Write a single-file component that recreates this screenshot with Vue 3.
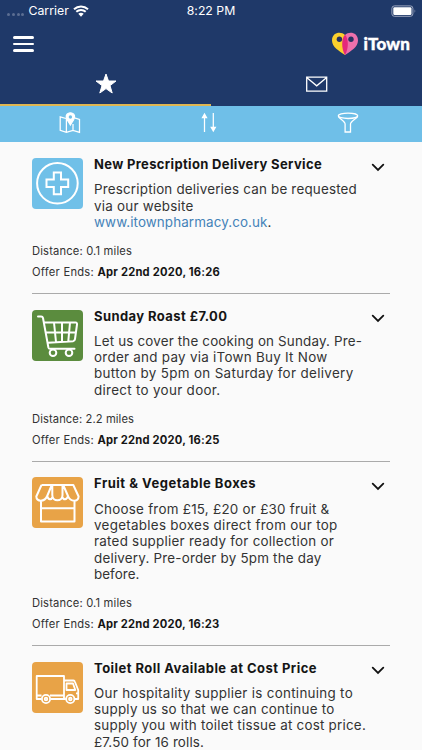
<script setup>
// Spreads a line of text over a given width by adjusting its letter spacing.
const vFit = {
  mounted(el, { value }) {
    const natural = el.getBoundingClientRect().width
    el.style.letterSpacing = (value - natural) / el.textContent.length + 'px'
  }
}

const offers = [
  {
    icon: 'health', color: 'blue', title: 'New Prescription Delivery Service', titleWidth: 228,
    lines: [
      { text: 'Prescription deliveries can be requested', width: 263 },
      { text: 'via our website', width: 99.5 },
      { link: 'www.itownpharmacy.co.uk', text: '.', width: 177.5 }
    ],
    distance: '0.1 miles', ends: 'Apr 22nd 2020, 16:26', endsWidth: 122.5
  },
  {
    icon: 'cart', color: 'green', title: 'Sunday Roast £7.00', titleWidth: 133.5,
    lines: [
      { text: 'Let us cover the cooking on Sunday. Pre-', width: 268 },
      { text: 'order and pay via iTown Buy It Now', width: 233.5 },
      { text: 'button by 5pm on Saturday for delivery', width: 259.5 },
      { text: 'direct to your door.', width: 126.5 }
    ],
    distance: '2.2 miles', ends: 'Apr 22nd 2020, 16:25', endsWidth: 122
  },
  {
    icon: 'stall', color: 'orange', title: 'Fruit & Vegetable Boxes', titleWidth: 162,
    lines: [
      { text: 'Choose from £15, £20 or £30 fruit &', width: 235.5 },
      { text: 'vegetables boxes direct from our top', width: 243.5 },
      { text: 'rated supplier ready for collection or', width: 240 },
      { text: 'delivery. Pre-order by 5pm the day', width: 227.5 },
      { text: 'before.', width: 45.5 }
    ],
    distance: '0.1 miles', ends: 'Apr 22nd 2020, 16:23', endsWidth: 122
  },
  {
    icon: 'truck', color: 'orange', title: 'Toilet Roll Available at Cost Price', titleWidth: 223,
    lines: [
      { text: 'Our hospitality supplier is continuing to', width: 259 },
      { text: 'supply us so that we can continue to', width: 240.5 },
      { text: 'supply you with toilet tissue at cost price.', width: 272 },
      { text: '£7.50 for 16 rolls.', width: 110 }
    ]
  }
]
</script>

<template>
  <div class="screen">
    <header class="header">
      <div class="status">
        <div class="carrier">
          <span class="dots"><i></i><i></i><i></i><i></i></span>
          <span v-fit="40.5" class="carrier-name">Carrier</span>
          <svg class="wifi" width="16" height="12" viewBox="0 0 16 12">
            <path d="M1 4.3C5 .6 11 .6 15 4.3M3.3 6.8C6 4.3 10 4.3 12.7 6.8" fill="none" stroke="#fff" stroke-width="2" />
            <path d="M5.3 8.8Q8 6.5 10.7 8.8L8 11.7Z" fill="#fff" />
          </svg>
        </div>
        <span v-fit="48.5" class="time">8:22 PM</span>
        <svg class="battery" width="26" height="12" viewBox="0 0 26 12">
          <rect x=".9" y=".9" width="21" height="10.4" rx="2.5" fill="none" stroke="#9ca6bf" />
          <rect x="2.3" y="2.3" width="18.2" height="7.6" rx="1.2" fill="#fff" />
          <path d="M23.6 4.3q1.4 1.8 0 3.6z" fill="#9ca6bf" />
        </svg>
      </div>
      <div class="brandbar">
        <div class="menu"><i></i><i></i><i></i></div>
        <div class="brand">
          <svg width="28" height="24" viewBox="0 0 28 24">
            <path d="M14 3C10-1 1 .2 1 8.5C1 15 8 19 14 23Z" fill="#fbd02d" />
            <path d="M14 3C18-1 27 .2 27 8.5C27 15 20 19 14 23Z" fill="#ed70ac" />
            <path d="M14 2.8C10.3 6 10.2 17 14 23C17.8 17 17.7 6 14 2.8Z" fill="#e5287b" />
            <circle cx="8.4" cy="7.2" r="2.7" fill="#283260" />
            <circle cx="20" cy="7.2" r="2.7" fill="#283260" />
          </svg>
          <span v-fit="46.5" class="brand-name">iTown</span>
        </div>
      </div>
      <nav class="tabs">
        <div class="tab active">
          <svg width="22" height="22" viewBox="0 0 22 22">
            <path d="M11 1L13.5 8H21L15 12.6L17.2 20L11 15.6L4.8 20L7 12.6L1 8H8.5Z" fill="#fff" stroke="#fff" stroke-linejoin="round" />
          </svg>
        </div>
        <div class="tab">
          <svg width="22" height="22" viewBox="0 0 22 22" fill="none" stroke="#fff" stroke-width="1.3">
            <path d="M.7 4.2H20.7V18.2H.7ZM.7 4.5L10.7 12.8L20.7 4.5" />
          </svg>
        </div>
      </nav>
    </header>
    <div class="tools">
      <svg width="22" height="22" viewBox="0 0 22 22" fill="none" stroke="#fff" stroke-width="1.25">
        <path d="M7 6.5L1.2 4.8V18.3L7.4 20.4L14 18.3L20.5 20.3V7.5L15.5 5.8M7.4 7V20.4M14 12V18.3" />
        <path d="M11.4 .8C8.5 .8 6.8 3 7.3 5.5C7.8 8 9.8 10 11.4 13C13 10 15 8 15.5 5.5C16 3 14.3 .8 11.4 .8Z" fill="#fff" />
        <circle cx="11.4" cy="5" r="1.7" fill="#6fbfe8" stroke="none" />
      </svg>
      <svg width="22" height="22" viewBox="0 0 22 22" fill="none" stroke="#fff" stroke-width="1.25">
        <path d="M6.5 3V20M15.3 1V17" />
        <path d="M3.4 6.2L6.5 .8L9.6 6.2ZM12.2 14.7L15.3 20.2L18.4 14.7Z" fill="#fff" stroke="none" />
      </svg>
      <svg width="22" height="22" viewBox="0 0 22 22" fill="none" stroke="#fff" stroke-width="1.3">
        <ellipse cx="11" cy="3.8" rx="9.7" ry="2.7" />
        <path d="M1.3 4.2C2 6.5 8.1 9.3 8.1 12V20H13.5V12C13.5 9.3 20 6.5 20.7 4.2" />
      </svg>
    </div>

    <main class="list">
      <article v-for="offer in offers" :key="offer.title" class="offer">
        <div class="top">
          <div class="tile" :class="offer.color">
            <svg v-if="offer.icon === 'health'" width="51" height="51" viewBox="0 0 51 51" fill="none" stroke="#fff" stroke-width="2">
              <circle cx="25.4" cy="25.3" r="20.3" />
              <path d="M21.8 14.5H29V21.5H36.2V29H29V36.3H21.8V29H14.5V21.5H21.8Z" />
            </svg>
            <svg v-else-if="offer.icon === 'cart'" width="51" height="51" viewBox="0 0 51 51" fill="none" stroke="#fff" stroke-width="2" stroke-linecap="round" stroke-linejoin="round">
              <path d="M6 6.5H9.2Q10.6 6.5 11 8L16.4 37.5Q16.7 38.8 18 38.8H42.5M13 12.5H43.5Q45.3 12.5 45 14.5L43 29Q42.7 31 41 31.2L16 32.8M14 22.5H43.5M22 12.5L24 32M30 12.5V31.5M38 12.5L36.3 31.2" />
              <circle cx="21" cy="42.8" r="3.3" fill="#5b8c3e" />
              <circle cx="37" cy="42.8" r="3.3" fill="#5b8c3e" />
            </svg>
            <svg v-else-if="offer.icon === 'stall'" width="51" height="51" viewBox="0 0 51 51" fill="none" stroke="#fff" stroke-width="2" stroke-linejoin="round">
              <path d="M9 24V44.5H42.5V24M9 31.2H42.5M9.5 8H41.3L46.6 19.5C46.6 25 38.5 25.3 36 19L31.2 8M19.8 8L15.2 19C12.5 25.3 4.3 25 4.3 19.5L9.5 8M20.3 8V18C20.3 25 30.5 25 30.5 18V8M15.2 19C16.3 23.2 19.4 23.2 20.6 19.8M36 19C34.8 23.2 31.4 23.2 30.2 19.8" />
            </svg>
            <svg v-else width="51" height="51" viewBox="0 0 51 51" fill="none" stroke="#fff" stroke-width="1.8" stroke-linejoin="round">
              <path d="M9.5 37H4.7V14H32V37H18.5M4.7 33.5H9.5M18 33.5H32M32 18.5H41.5Q42.5 18.5 43 20L46.2 28V37H42.8M32 37H33.8M34.5 21.5H41L43.3 28H34.5ZM44 31.3H46" />
              <circle cx="14" cy="37" r="4.1" />
              <circle cx="14" cy="37" r="1.3" />
              <circle cx="38.3" cy="37" r="4.1" />
              <circle cx="38.3" cy="37" r="1.3" />
            </svg>
          </div>
          <div class="body">
            <h2><span v-fit="offer.titleWidth">{{ offer.title }}</span></h2>
            <p>
              <span v-for="line in offer.lines" :key="line.text" class="line"><span v-fit="line.width"><a v-if="line.link">{{ line.link }}</a>{{ line.text }}</span></span>
            </p>
          </div>
          <svg class="chevron" width="14" height="9" viewBox="0 0 14 9">
            <path d="M1.7 1.7L7 7L12.3 1.7" fill="none" stroke="#111" stroke-width="1.8" stroke-linecap="round" />
          </svg>
        </div>
        <template v-if="offer.ends">
          <div class="meta"><span v-fit="offer.distance === '2.2 miles' ? 102 : 100">Distance: {{ offer.distance }}</span></div>
          <div class="meta"><span v-fit="62">Offer Ends:</span><b v-fit="offer.endsWidth">{{ offer.ends }}</b></div>
        </template>
      </article>
    </main>
  </div>
</template>

<style>
body {
  margin: 0;
  overflow: hidden;
}
</style>

<style scoped>
.screen {
  width: 422px;
  height: 750px;
  overflow: hidden;
  background: #fafafa;
  color: #333;
  font-family: Inter, "Liberation Sans", sans-serif;
}
.screen span,
.screen b {
  white-space: pre;
}
svg {
  display: block;
  flex: none;
}
.header {
  height: 106px;
  display: flex;
  flex-direction: column;
  background: #1f3969;
  color: #fff;
}
.status {
  height: 21px;
  display: grid;
  grid-template-columns: 1fr auto 1fr;
  align-items: center;
  padding: 0 7px;
  font-size: 12.3px;
  line-height: 21px;
}
.carrier {
  display: flex;
  align-items: center;
}
.dots {
  display: flex;
  gap: 1.8px;
  margin: 7px 4px 0 0;
}
.dots i {
  width: 3px;
  height: 3px;
  border-radius: 50%;
  background: #5c6e92;
}
.wifi {
  margin-left: 4px;
}
.battery {
  justify-self: end;
  margin-right: -2px;
}
.brandbar {
  height: 46px;
  display: flex;
  align-items: center;
  justify-content: space-between;
  padding: 0 12px 0 13px;
}
.menu {
  display: flex;
  flex-direction: column;
  gap: 4.3px;
}
.menu i {
  width: 21px;
  height: 2.4px;
  border-radius: 2px;
  background: #fff;
}
.brand {
  display: flex;
  align-items: center;
  gap: 4.6px;
}
.brand-name {
  font: 900 17px/24px Lato, sans-serif;
  -webkit-text-stroke: 0.4px #fff;
}
.tabs {
  flex: 1;
  display: grid;
  grid-template-columns: 1fr 1fr;
}
.tab {
  display: flex;
  justify-content: center;
  padding-top: 6px;
  border-bottom: 2px solid transparent;
}
.tab.active {
  border-bottom-color: #dfb652;
}
.tools {
  height: 36px;
  box-sizing: border-box;
  display: grid;
  grid-template-columns: repeat(3, 139px);
  justify-items: center;
  padding-top: 6px;
  background: #6fbfe8;
}
.list {
  padding: 1px 32px 0;
}
.offer {
  box-sizing: border-box;
  padding-bottom: 10px;
  border-bottom: 1px solid #aaa;
}
.top {
  display: grid;
  grid-template-columns: 51px 1fr 14px;
  column-gap: 11px;
  padding-right: 5px;
}
.tile {
  width: 51px;
  height: 51px;
  margin-top: 15.2px;
  border-radius: 4px;
}
.blue { background: #70c0e8; }
.green { background: #5b8c3e; }
.orange { background: #e8a347; }
.body {
  min-width: 0;
  padding-top: 13.2px;
}
h2 {
  margin: 0;
  color: #151515;
  font-size: 13px;
  font-weight: 700;
  line-height: 16px;
}
p {
  margin: 9.2px 0 0;
  font-size: 13.4px;
}
.line {
  display: block;
  height: 16.33px;
  line-height: 16.33px;
}
a {
  color: #4482b8;
}
.chevron {
  margin-top: 19.6px;
}
.meta {
  display: flex;
  gap: 3.5px;
  height: 21.3px;
  font-size: 11.2px;
  line-height: 21.3px;
}
.top + .meta {
  margin-top: 10.5px;
}
.meta b {
  color: #151515;
}
</style>
